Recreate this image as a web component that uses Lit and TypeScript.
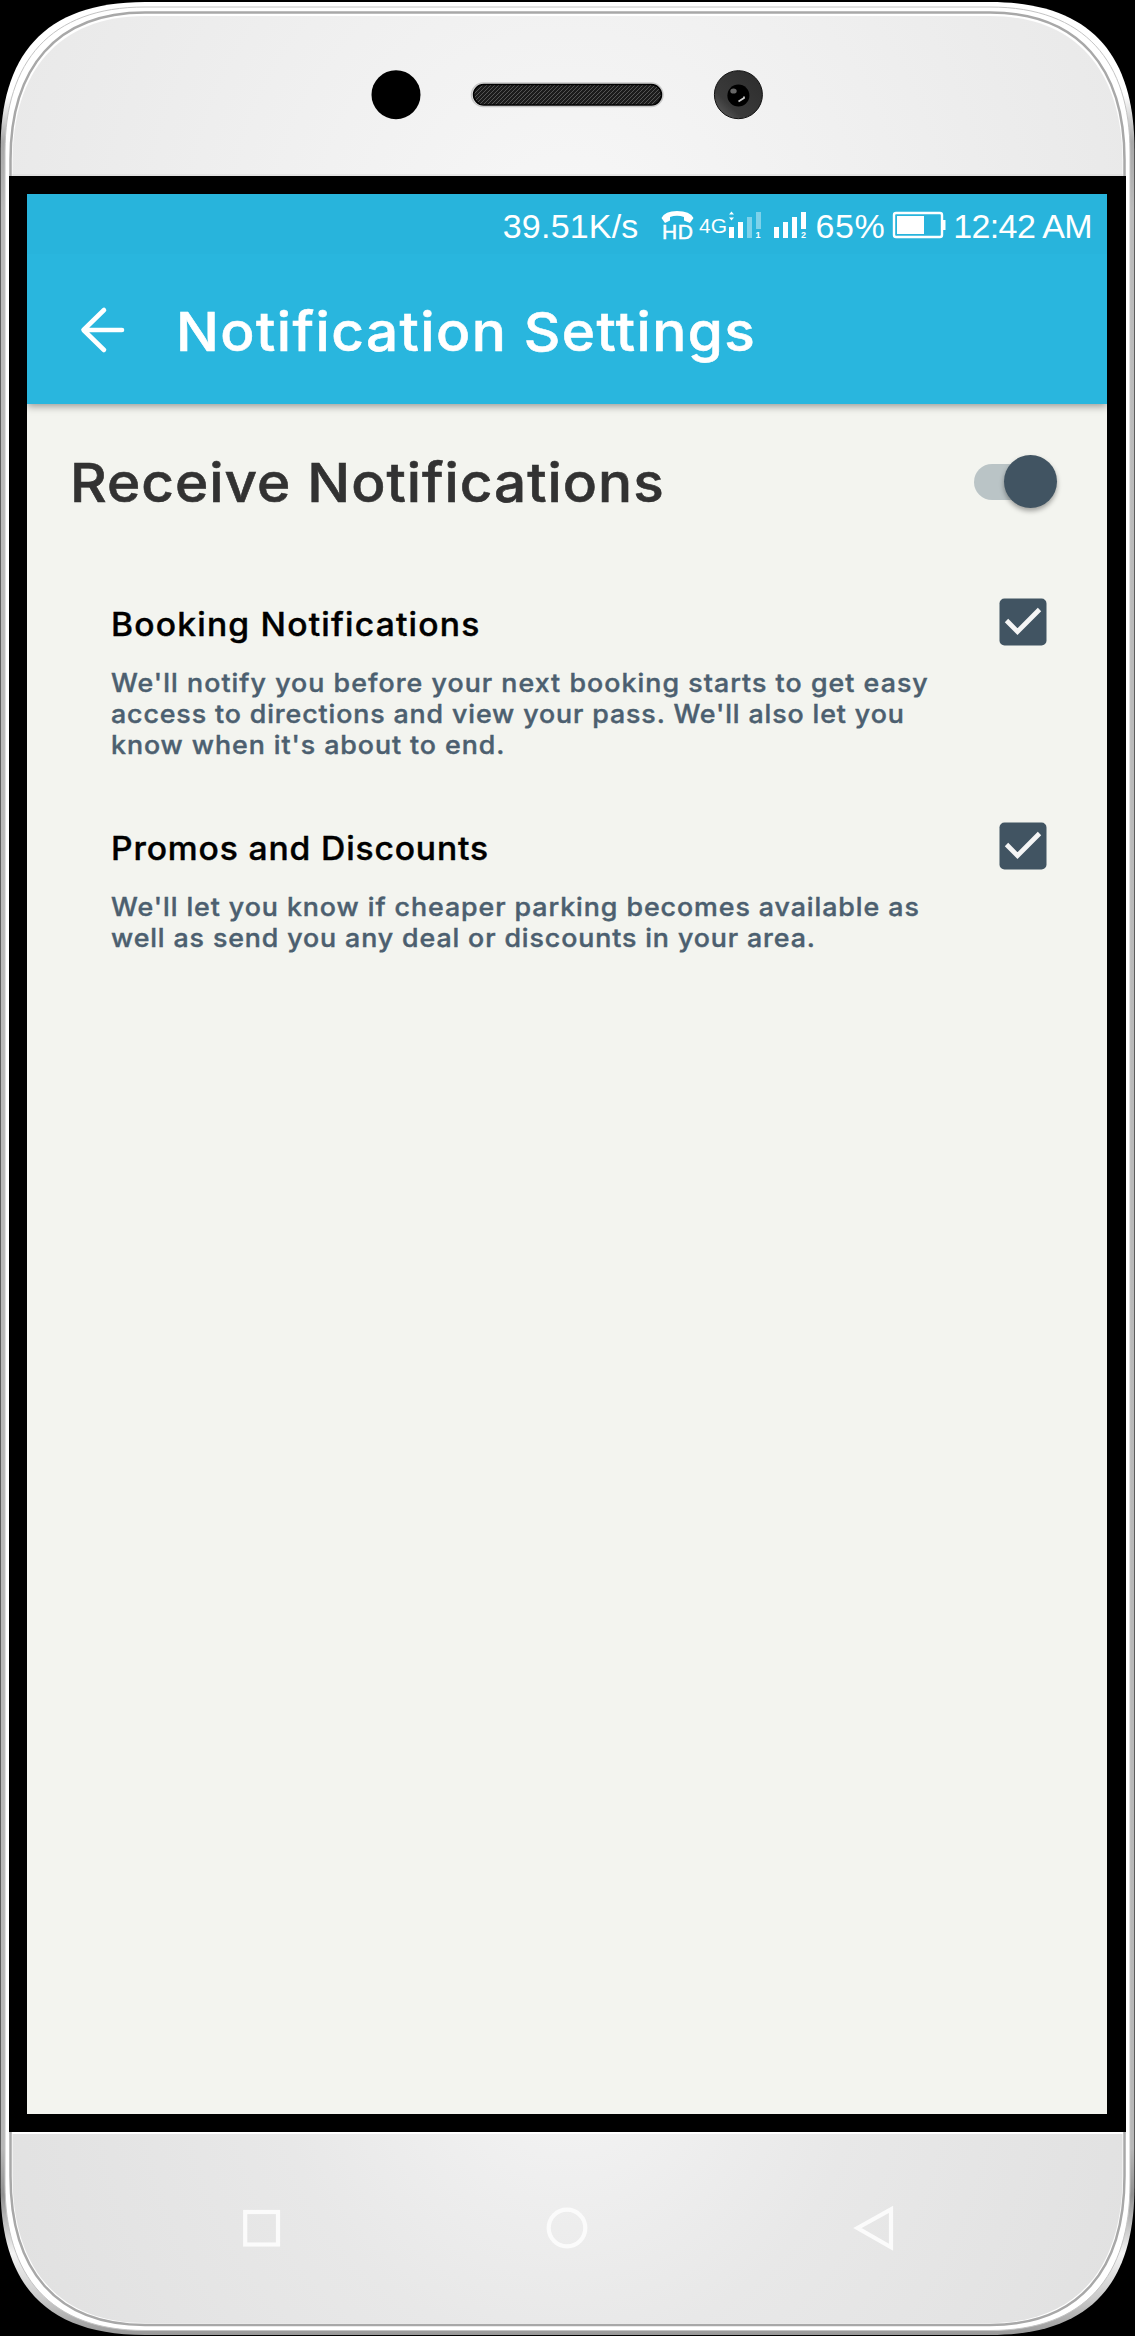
import { LitElement, html, css } from "lit";
import { customElement, property } from "lit/decorators.js";

const OUTER = "M.5 150C.5 57 42 2 145 2H990C1093 2 1134.500 57 1134.500 150V2186C1134.500 2281 1093 2335 990 2335H145C42 2335 .5 2281 .5 2186Z";
const RIM = "M5 152C5 62 50 7 145 7H990C1085 7 1130 62 1130 152V2184C1130 2276 1085 2330.500 990 2330.500H145C50 2330.500 5 2276 5 2184Z";
const INNER = "M10.500 160C10.500 68 56 12.500 145 12.500H990C1079 12.500 1124.500 68 1124.500 160V2176C1124.500 2270 1079 2325 990 2325H145C56 2325 10.500 2270 10.500 2176Z";
const FACE = "M12.500 162C12.500 72 58 16 145 16H990C1077 16 1122.500 72 1122.500 162V2176C1122.500 2268 1077 2323 990 2323H145C58 2323 12.500 2268 12.500 2176Z";

@customElement("status-bar")
class StatusBar extends LitElement {
  static styles = css`
    :host { display: block; height: 60px; background: #28b4dc; color: #fff; font-family: "Liberation Sans", sans-serif; }
    .row { display: flex; align-items: flex-start; justify-content: flex-end; padding: 13px 15px 0 0; height: 47px; font-size: 34px; line-height: 38px; white-space: nowrap; }
    .speed { margin-right: 22px; letter-spacing: 0.2px; }
    .time { letter-spacing: -0.6px; margin-left: 7px; }
    .percent { letter-spacing: 0.5px; }
    .icons { display: block; margin-right: 9px; }
    .battery { display: block; margin-left: 7px; }
    .hd { font-size: 21px; }
    .net { font-size: 21px; }
    .sim { font-size: 9px; font-weight: 700; }
  `;
  render() {
    return html`<div class="row">
      <span class="speed">39.51K/s</span>
      <svg class="icons" width="146" height="40" viewBox="659 207 146 40" fill="#fff">
        <path d="M659.500 218Q663 211 675 211Q688 211 691.500 218L688 223L682 220.500V217Q675 214.500 668 217V220.500L663 223Z"/>
        <text class="hd" x="660" y="238.500" textLength="31" stroke="#fff" stroke-width=".5">HD</text>
        <text class="net" x="697" y="233" textLength="28" lengthAdjust="spacingAndGlyphs">4G</text>
        <path d="M727 214.500L729.500 211.500L732 214.500ZM727 217.500L729.500 220.500L732 217.500Z"/>
        <path d="M727 227H732V238H727ZM736 222H741V238H736Z"/>
        <path opacity=".4" d="M745 217H750V238H745ZM754 212H759V229H754Z"/>
        <text class="sim" x="753.500" y="238">1</text>
        <path d="M772 227H777V238H772ZM781 222H786V238H781ZM790 217H795V238H790ZM799 212H804V229H799Z"/>
        <text class="sim" x="799" y="238">2</text>
      </svg>
      <span class="percent">65%</span>
      <svg class="battery" width="54" height="40" viewBox="891 207 54 40">
        <rect x="893" y="213" width="48" height="24" rx="2" fill="none" stroke="#fff" stroke-width="2.400"/>
        <path fill="#fff" d="M896 216H923V234H896ZM941.500 220H944.500V230H941.500Z"/>
      </svg>
      <span class="time">12:42 AM</span>
    </div>`;
  }
}

@customElement("app-toolbar")
class AppToolbar extends LitElement {
  @property() heading = "";
  static styles = css`
    :host { display: block; height: 150px; background: #29b6de; box-shadow: 0 2px 8px rgba(0, 0, 0, .4); clip-path: inset(0 0 -20px 0); }
    .row { display: flex; align-items: center; height: 152px; padding-left: 52px; color: #fff; }
    .back { width: 48px; height: 48px; margin-right: 48.500px; }
    .title { margin: 4px 0 0; font: 500 54px/60px Inter, sans-serif; letter-spacing: 1.360px; -webkit-text-stroke: 0.6px #fff; transform: scaleX(1.05); transform-origin: left; white-space: nowrap; }
  `;
  render() {
    return html`<div class="row">
      <svg class="back" viewBox="79 306 48 48" fill="none" stroke="#fff" stroke-width="4.600" stroke-linecap="round" stroke-linejoin="round">
        <path d="M104 310L83.500 330L104 350M84 330H122"/>
      </svg>
      <h1 class="title">${this.heading}</h1>
    </div>`;
  }
}

@customElement("toggle-switch")
class ToggleSwitch extends LitElement {
  static styles = css`
    :host { display: flex; width: 83px; height: 53px; align-items: center; }
    .track { display: flex; align-items: center; justify-content: flex-end; width: 78px; height: 36px; border-radius: 18px; background: #bac4c6; }
    .thumb { flex: none; width: 53px; height: 53px; margin-right: -5px; border-radius: 50%; background: #415462; box-shadow: 0 3px 5px rgba(0, 0, 0, .35); }
  `;
  render() {
    return html`<div class="track"><div class="thumb"></div></div>`;
  }
}

@customElement("notification-option")
class NotificationOption extends LitElement {
  @property() label = "";
  @property({ attribute: false }) lines: { text: string; tracking: string }[] = [];
  static styles = css`
    :host { display: flex; justify-content: space-between; align-items: flex-start; padding: 0 60px 0 84px; }
    .label { margin: 5px 0 0; font: 500 32px/44px Inter, sans-serif; letter-spacing: var(--label-tracking, 1px); color: #000; -webkit-text-stroke: 0.4px #000; transform: scaleX(1.05); transform-origin: left; white-space: nowrap; }
    .text { margin: 20px 0 0; font: 500 25.500px/31px Inter, sans-serif; color: #4c5f6f; -webkit-text-stroke: 0.4px #4c5f6f; transform: scaleX(1.05); transform-origin: left; white-space: nowrap; }
    .line { display: block; }
    .wide { letter-spacing: 0.990px; }
    .regular { letter-spacing: 0.890px; }
    .tight { letter-spacing: 0.840px; }
    .check { flex: none; width: 48px; height: 48px; }
  `;
  render() {
    return html`<div>
        <h3 class="label">${this.label}</h3>
        <p class="text">${this.lines.map((l) => html`<span class="line ${l.tracking}">${l.text}</span>`)}</p>
      </div>
      <svg class="check" viewBox="0 0 48 48">
        <rect x=".5" y=".5" width="47" height="47" rx="5" fill="#415462"/>
        <path d="M7.500 22.500L18.500 33.700L40.500 11.500" fill="none" stroke="#f5f5f5" stroke-width="4.800"/>
      </svg>`;
  }
}

@customElement("app-root")
class AppRoot extends LitElement {
  static styles = css`
    :host { display: block; width: 1135px; height: 2336px; background: #000; }
    .phone { position: relative; display: flex; flex-direction: column; height: 2336px; overflow: hidden; }
    .shell { position: absolute; inset: 0; }
    .top, .bottom, .bezel { position: relative; }
    .top { height: 176px; display: flex; justify-content: center; padding-right: 1px; }
    .bezel { height: 1920px; margin: 0 9.500px 0 9px; padding: 18px; background: #000; }
    .screen { display: flex; flex-direction: column; width: 1080px; height: 1920px; background: #f3f4ef; }
    .bottom { height: 204px; display: flex; justify-content: center; }
    .master { display: flex; justify-content: space-between; align-items: center; padding: 50px 50px 0 43px; height: 55px; }
    .heading { margin: 2px 0 0; font: 500 54px/60px Inter, sans-serif; letter-spacing: 0.930px; -webkit-text-stroke: 0.6px #323232; transform: scaleX(1.05); transform-origin: left; color: #323232; white-space: nowrap; }
    .first { margin-top: 89px; --label-tracking: 1.150px; }
    .second { margin-top: 62px; --label-tracking: 0.830px; }
  `;
  render() {
    return html`<div class="phone">
      <svg class="shell" width="1135" height="2336" viewBox="0 0 1135 2336" fill="none">
        <defs>
          <linearGradient id="edge" x1="0" y1="0" x2="0" y2="1">
            <stop offset="0" stop-color="#fff"/><stop offset=".04" stop-color="#fff"/><stop offset=".06" stop-color="#a8a8a8"/><stop offset=".09" stop-color="#bcbcbc"/>
            <stop offset=".92" stop-color="#b8b8b8"/><stop offset=".94" stop-color="#909090"/><stop offset=".965" stop-color="#f4f4f4"/><stop offset=".985" stop-color="#c8c8c8"/><stop offset="1" stop-color="#989898"/>
          </linearGradient>
          <radialGradient id="faceTop" gradientUnits="userSpaceOnUse" cx="567" cy="240" r="580">
            <stop offset="0" stop-color="#f7f7f7"/><stop offset="1" stop-color="#e9e9e9"/>
          </radialGradient>
          <radialGradient id="faceBottom" gradientUnits="userSpaceOnUse" cx="567" cy="2060" r="640">
            <stop offset="0" stop-color="#f4f4f4"/><stop offset=".45" stop-color="#e8e8e8"/><stop offset="1" stop-color="#e0e0e0"/>
          </radialGradient>
          <clipPath id="upper"><rect width="1135" height="1168"/></clipPath>
          <clipPath id="lower"><rect y="1168" width="1135" height="1168"/></clipPath>
        </defs>
        <path d=${OUTER} fill="url(#edge)"/>
        <path d=${RIM} fill="#fff" stroke="#c4c4c4"/>
        <path d=${INNER} fill="#fff" stroke="#a8a8a8" stroke-width="2.500"/>
        <path d=${FACE} fill="url(#faceTop)" clip-path="url(#upper)"/>
        <path d=${FACE} fill="url(#faceBottom)" clip-path="url(#lower)"/>
        <path d="M12 175H1123" stroke="#d8d8d8"/>
        <path d="M12 2133H1123" stroke="#fff" stroke-width="2"/>
      </svg>
      <div class="top">
        <svg width="400" height="176" viewBox="367 0 400 176">
          <defs>
            <pattern id="mesh" width="4" height="4" patternUnits="userSpaceOnUse">
              <rect width="4" height="4" fill="#1c1c1c"/><path d="M-1 5L5 -1" stroke="#555"/>
            </pattern>
            <linearGradient id="ring" x1="1" y1="0" x2="0" y2="1">
              <stop offset="0" stop-color="#2c2c2c"/><stop offset=".7" stop-color="#3a3a3a"/><stop offset="1" stop-color="#666"/>
            </linearGradient>
          </defs>
          <circle cx="396" cy="94.700" r="24.500" fill="#000"/>
          <rect x="471.500" y="83" width="191.500" height="23.500" rx="11.700" fill="#fff" stroke="#c8c8c8" stroke-width="1.500"/>
          <rect x="473.500" y="84.500" width="188" height="20.500" rx="10.200" fill="url(#mesh)" stroke="#000" stroke-width="1.500"/>
          <circle cx="738.400" cy="94.700" r="24" fill="url(#ring)" stroke="#111"/>
          <circle cx="738.400" cy="95.500" r="11" fill="#000"/>
          <ellipse cx="733.500" cy="91" rx="3.200" ry="2.600" fill="#666"/>
          <path d="M738.500 101.500L744 98V96.500" stroke="#ccc" stroke-width="1.800" fill="none"/>
        </svg>
      </div>
      <div class="bezel">
        <div class="screen">
          <status-bar></status-bar>
          <app-toolbar heading="Notification Settings"></app-toolbar>
          <div class="master">
            <h2 class="heading">Receive Notifications</h2>
            <toggle-switch></toggle-switch>
          </div>
          <notification-option class="first" label="Booking Notifications" .lines=${[
            { text: "We'll notify you before your next booking starts to get easy", tracking: "wide" },
            { text: "access to directions and view your pass. We'll also let you", tracking: "tight" },
            { text: "know when it's about to end.", tracking: "regular" },
          ]}></notification-option>
          <notification-option class="second" label="Promos and Discounts" .lines=${[
            { text: "We'll let you know if cheaper parking becomes available as", tracking: "regular" },
            { text: "well as send you any deal or discounts in your area.", tracking: "tight" },
          ]}></notification-option>
        </div>
      </div>
      <div class="bottom">
        <svg width="1135" height="204" viewBox="0 2132 1135 204" fill="none" stroke="#fbfbfb" stroke-width="4.200">
          <rect x="245.200" y="2212" width="32.800" height="32.500"/>
          <circle cx="567" cy="2228" r="18.300"/>
          <path d="M857.500 2228L891 2209.300V2247.200Z"/>
        </svg>
      </div>
    </div>`;
  }
}
